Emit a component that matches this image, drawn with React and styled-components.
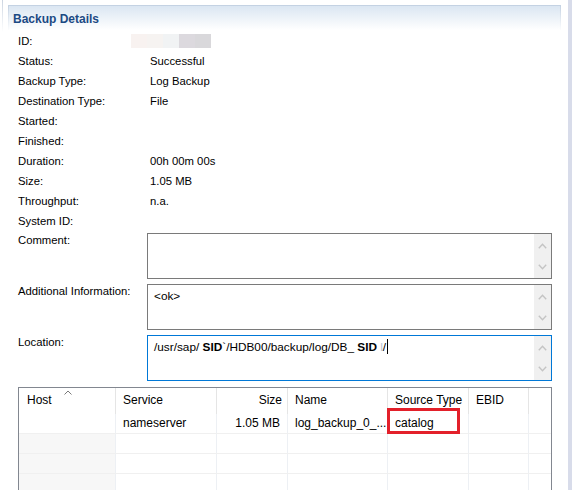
import React from 'react';
import styled, { createGlobalStyle } from 'styled-components';

const FONT = '"Segoe UI", "Liberation Sans", Arial, sans-serif';

const GlobalStyle = createGlobalStyle`
  body {
    margin: 0;
    background: #fff;
    font-family: ${FONT};
    font-size: 11.3px;
    color: #000;
  }
`;

const details = [
  { label: 'ID:', value: null, redacted: true },
  { label: 'Status:', value: 'Successful' },
  { label: 'Backup Type:', value: 'Log Backup' },
  { label: 'Destination Type:', value: 'File' },
  { label: 'Started:', value: '' },
  { label: 'Finished:', value: '' },
  { label: 'Duration:', value: '00h 00m 00s' },
  { label: 'Size:', value: '1.05 MB' },
  { label: 'Throughput:', value: 'n.a.' },
  { label: 'System ID:', value: '' },
];

const redactColors = ['#f8f2f0', '#f6f3f1', '#f1f3f4', '#dcd9de', '#d9d8db'];

const columns = [
  { key: 'host', title: 'Host', width: 97 },
  { key: 'service', title: 'Service', width: 101 },
  { key: 'size', title: 'Size', width: 71, right: true },
  { key: 'name', title: 'Name', width: 100 },
  { key: 'source', title: 'Source Type', width: 81 },
  { key: 'ebid', title: 'EBID', width: 60 },
  { key: 'fill', title: '', width: 22 },
];

const rows = [
  { host: '', service: 'nameserver', size: '1.05 MB', name: 'log_backup_0_...', source: 'catalog', ebid: '', fill: '' },
  {},
  {},
  {},
];

const ChevronUp = () => (
  <svg width="9" height="6" viewBox="0 0 9 6">
    <path d="M0.8 5.2 L4.5 1.3 L8.2 5.2" fill="none" stroke="#c4c4c4" strokeWidth="1.4" />
  </svg>
);

const ChevronDown = () => (
  <svg width="9" height="6" viewBox="0 0 9 6">
    <path d="M0.8 0.8 L4.5 4.7 L8.2 0.8" fill="none" stroke="#c4c4c4" strokeWidth="1.4" />
  </svg>
);

const TextArea = ({ focused, children }) => (
  <Box $focused={focused}>
    <BoxText>{children}</BoxText>
    <ScrollBar>
      <ChevronUp />
      <ChevronDown />
    </ScrollBar>
  </Box>
);

const App = () => (
  <>
    <GlobalStyle />
    <Page>
      <TabEdge />
      <Section>
        <Header>
          <Title>Backup Details</Title>
        </Header>
        <Body>
          <InfoList>
            {details.map((d) => (
              <InfoRow key={d.label}>
                <Label>{d.label}</Label>
                {d.redacted ? (
                  <Redacted>
                    {redactColors.map((c) => (
                      <RedactBlock key={c} style={{ background: c }} />
                    ))}
                  </Redacted>
                ) : (
                  <Value>{d.value}</Value>
                )}
              </InfoRow>
            ))}
          </InfoList>

          <Fields>
            <FieldRow>
              <FieldLabel>Comment:</FieldLabel>
              <TextArea />
            </FieldRow>
            <FieldRow>
              <FieldLabel>Additional Information:</FieldLabel>
              <TextArea>&lt;ok&gt;</TextArea>
            </FieldRow>
            <FieldRow>
              <FieldLabel>Location:</FieldLabel>
              <TextArea focused>
                /usr/sap/ <b>SID</b>`/HDB00/backup/log/DB_ <b>SID</b> <Faint>l</Faint>/<Caret />
              </TextArea>
            </FieldRow>
          </Fields>

          <Table>
            <HeadRow>
              {columns.map((c) => (
                <HeadCell key={c.key} $w={c.width} $right={c.right}>
                  {c.title}
                  {c.key === 'host' && (
                    <SortMark>
                      <svg width="8" height="5" viewBox="0 0 8 5">
                        <path d="M0.5 4.5 L4 1 L7.5 4.5" fill="none" stroke="#7a7a7a" strokeWidth="1" />
                      </svg>
                    </SortMark>
                  )}
                </HeadCell>
              ))}
            </HeadRow>
            {rows.map((r, i) => (
              <Row key={i}>
                {columns.map((c) => (
                  <Cell key={c.key} $w={c.width} $right={c.right} $shaded={c.key === 'host' && i > 0}>
                    {r[c.key]}
                    {i === 0 && c.key === 'source' && <Highlight />}
                  </Cell>
                ))}
              </Row>
            ))}
          </Table>
        </Body>
      </Section>
      <RightStrip />
    </Page>
  </>
);

const Page = styled.div`
  width: 576px;
  height: 490px;
  display: flex;
  align-items: flex-start;
  overflow: hidden;
  background: #fff;
`;

const TabEdge = styled.div`
  width: 1px;
  height: 32px;
  margin-left: 2px;
  flex-shrink: 0;
  background: linear-gradient(to bottom, #ccd5e1, rgba(255, 255, 255, 0));
`;

const Section = styled.div`
  width: 553px;
  flex-shrink: 0;
  margin: 5px 0 0 5px;
`;

const Header = styled.div`
  height: 24px;
  border: 1px solid transparent;
  border-bottom: none;
  border-image: linear-gradient(to bottom, #c3d1e2, #ffffff) 1;
  background: linear-gradient(to bottom, #dbe6f2, #ffffff);
  display: flex;
  align-items: center;
  padding-left: 4px;
`;

const Title = styled.span`
  font-weight: bold;
  font-size: 12px;
  color: #1c4a84;
  margin-top: 1px;
`;

const Body = styled.div`
  padding-left: 10px;
`;

const InfoList = styled.div`
  display: flex;
  flex-direction: column;
  margin-top: 1px;
`;

const InfoRow = styled.div`
  display: grid;
  grid-template-columns: 132px 1fr;
  height: 20px;
  align-items: center;
`;

const Label = styled.span`
  white-space: nowrap;
`;

const Value = styled.span``;

const Redacted = styled.div`
  display: flex;
  margin-left: -19px;
  margin-top: -1px;
  height: 14px;
`;

const RedactBlock = styled.div`
  width: 16px;
  height: 100%;
`;

const Fields = styled.div`
  display: flex;
  flex-direction: column;
  gap: 5px;
  margin-top: 2px;
`;

const FieldRow = styled.div`
  display: grid;
  grid-template-columns: 129px 405px;
  align-items: start;
`;

const FieldLabel = styled.span`
  white-space: nowrap;
  padding-top: 1px;
`;

const Box = styled.div`
  height: 44px;
  border: 1px solid ${(p) => (p.$focused ? '#0078d7' : '#7a7a7a')};
  display: flex;
  background: #fff;
`;

const BoxText = styled.div`
  flex: 1;
  padding: 3px 6px;
  line-height: 16px;
  white-space: pre;
  font-size: 11.8px;
  b {
    font-weight: bold;
  }
`;

const Faint = styled.span`
  color: #b8c4d6;
`;

const Caret = styled.span`
  display: inline-block;
  width: 1px;
  height: 15px;
  background: #000;
  margin-left: 1px;
  vertical-align: -3px;
`;

const ScrollBar = styled.div`
  width: 17px;
  background: #f0f0f0;
  display: flex;
  flex-direction: column;
  justify-content: space-between;
  align-items: center;
  padding: 9px 0 8px;
`;

const Table = styled.div`
  width: 532px;
  margin: 6px 0 0 0;
  border: 1px solid #828790;
  border-bottom: none;
  display: flex;
  flex-direction: column;
`;

const HeadRow = styled.div`
  display: flex;
  height: 26px;
`;

const HeadCell = styled.div`
  position: relative;
  width: ${(p) => p.$w}px;
  flex-shrink: 0;
  box-sizing: border-box;
  border-right: 1px solid #e5e5e5;
  display: flex;
  align-items: center;
  justify-content: ${(p) => (p.$right ? 'flex-end' : 'flex-start')};
  padding: 0 5px 2px 7px;
  font-size: 12px;
  white-space: nowrap;
  &:first-child {
    padding-left: 8px;
  }
  &:last-child {
    border-right: none;
  }
`;

const SortMark = styled.span`
  position: absolute;
  left: 45px;
  top: 2px;
  display: flex;
`;

const Row = styled.div`
  display: flex;
  height: 19px;
  border-bottom: 1px solid #f0f0f0;
`;

const Cell = styled.div`
  position: relative;
  width: ${(p) => p.$w}px;
  flex-shrink: 0;
  box-sizing: border-box;
  border-right: 1px solid #edf0f4;
  background: ${(p) => (p.$shaded ? '#f7f7f7' : '#fff')};
  display: flex;
  align-items: center;
  justify-content: ${(p) => (p.$right ? 'flex-end' : 'flex-start')};
  padding: 0 7px 1px 7px;
  font-size: 12px;
  white-space: nowrap;
  &:last-child {
    border-right: none;
  }
`;

const Highlight = styled.div`
  position: absolute;
  left: -1px;
  top: -6px;
  width: 73px;
  height: 26px;
  box-sizing: border-box;
  border: 3px solid #e3202a;
`;

const RightStrip = styled.div`
  width: 4px;
  height: 490px;
  flex-shrink: 0;
  margin-left: 7px;
  background: #d8dcea;
`;

export default App;
